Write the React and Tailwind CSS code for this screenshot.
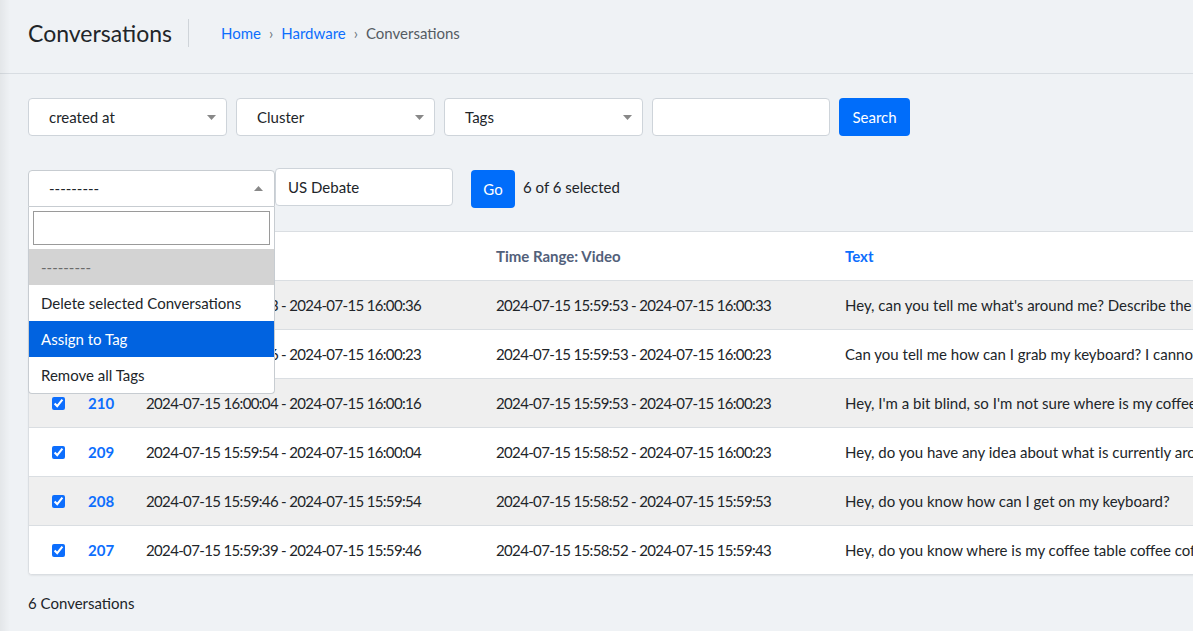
import React from "react";

const rows = [
  {
    id: 212,
    audio: "2024-07-15 16:00:23 - 2024-07-15 16:00:36",
    video: "2024-07-15 15:59:53 - 2024-07-15 16:00:33",
    text: "Hey, can you tell me what's around me? Describe the room and everything that is in front of me.",
  },
  {
    id: 211,
    audio: "2024-07-15 16:00:16 - 2024-07-15 16:00:23",
    video: "2024-07-15 15:59:53 - 2024-07-15 16:00:23",
    text: "Can you tell me how can I grab my keyboard? I cannot find it on my desk.",
  },
  {
    id: 210,
    audio: "2024-07-15 16:00:04 - 2024-07-15 16:00:16",
    video: "2024-07-15 15:59:53 - 2024-07-15 16:00:23",
    text: "Hey, I'm a bit blind, so I'm not sure where is my coffee table. Can you help me?",
  },
  {
    id: 209,
    audio: "2024-07-15 15:59:54 - 2024-07-15 16:00:04",
    video: "2024-07-15 15:58:52 - 2024-07-15 16:00:23",
    text: "Hey, do you have any idea about what is currently around me?",
  },
  {
    id: 208,
    audio: "2024-07-15 15:59:46 - 2024-07-15 15:59:54",
    video: "2024-07-15 15:58:52 - 2024-07-15 15:59:53",
    text: "Hey, do you know how can I get on my keyboard?",
  },
  {
    id: 207,
    audio: "2024-07-15 15:59:39 - 2024-07-15 15:59:46",
    video: "2024-07-15 15:58:52 - 2024-07-15 15:59:43",
    text: "Hey, do you know where is my coffee table coffee cof cup?",
  },
];

const cols = "grid grid-cols-[47px_58px_350px_349px_1fr] items-center";

function Caret({ up }) {
  return (
    <svg width="9" height="5" viewBox="0 0 9 5" className="shrink-0">
      {up ? <path d="M0 5 L4.5 0 L9 5 Z" fill="#888" /> : <path d="M0 0 L4.5 5 L9 0 Z" fill="#888" />}
    </svg>
  );
}

function FilterSelect({ label }) {
  return (
    <div className="flex h-[38px] w-[199px] items-center justify-between rounded-[4px] border border-[#ced4da] bg-white pl-[20px] pr-[10px] text-[15px] text-[#212529]">
      <span>{label}</span>
      <Caret />
    </div>
  );
}

function Check() {
  return <input type="checkbox" checked readOnly className="h-[13px] w-[13px] accent-[#0d6efd]" />;
}

export default function App() {
  return (
    <div className="relative h-screen w-full overflow-hidden bg-[#eff2f5] font-['Lato',sans-serif] text-[#212529]">
      <div className="pointer-events-none absolute left-0 top-0 z-20 h-full w-[10px] bg-gradient-to-r from-black/[0.05] to-transparent" />

      <header className="flex h-[74px] items-center border-b border-[#d8dde2] pb-[8px] pl-[28px]">
        <h1 className="border-r border-[#cfd4d9] pr-[16px] text-[23px] leading-[28px] text-[#212529]">Conversations</h1>
        <nav className="ml-[32px] mt-[2px] flex items-center gap-[8px] text-[15px]">
          <span className="text-[#0d6efd]">Home</span>
          <span className="text-[#6c757d]">›</span>
          <span className="text-[#0d6efd]">Hardware</span>
          <span className="text-[#6c757d]">›</span>
          <span className="text-[#555c63]">Conversations</span>
        </nav>
      </header>

      <div className="px-[28px]">
        <div className="mt-[24px] flex items-center gap-[9px]">
          <FilterSelect label="created at" />
          <FilterSelect label="Cluster" />
          <FilterSelect label="Tags" />
          <div className="h-[38px] w-[178px] rounded-[4px] border border-[#ced4da] bg-white" />
          <button className="h-[38px] w-[71px] rounded-[4px] bg-[#006dfa] text-[15px] text-white">Search</button>
        </div>

        <div className="mt-[32px] flex items-start">
          <div className="relative z-10 mt-[2px]">
            <div className="flex h-[37px] w-[247px] items-center justify-between rounded-t-[4px] border border-[#c7ccd1] bg-white pl-[20px] pr-[11px] text-[15px]">
              <span>---------</span>
              <Caret up />
            </div>
            <div className="absolute left-0 top-full w-[247px] overflow-hidden rounded-b-[4px] border border-t-0 border-[#c7ccd1] bg-white text-[15px]">
              <div className="p-[4px]">
                <div className="h-[34px] border border-[#9a9a9a] bg-white" />
              </div>
              <div className="flex h-[36px] items-center bg-[#d3d3d3] pl-[12px] text-[#6b6b6b]">---------</div>
              <div className="flex h-[36px] items-center pl-[12px]">Delete selected Conversations</div>
              <div className="flex h-[36px] items-center bg-[#0163e0] pl-[12px] text-white">Assign to Tag</div>
              <div className="flex h-[36px] items-center pl-[12px]">Remove all Tags</div>
            </div>
          </div>
          <div className="flex h-[38px] w-[178px] items-center rounded-[4px] border border-[#ced4da] bg-white pl-[12px] text-[15px]">
            US Debate
          </div>
          <button className="ml-[18px] mt-[2px] h-[38px] w-[44px] rounded-[4px] bg-[#006dfa] text-[15px] text-white">Go</button>
          <span className="ml-[8px] flex h-[38px] items-center text-[15px]">6 of 6 selected</span>
        </div>

        <div className="mt-[23px] w-[1400px] overflow-hidden rounded-[4px] border border-[#dadee2] bg-white shadow-[0_1px_2px_rgba(0,0,0,0.06)]">
          <div className={`${cols} h-[48px] text-[15px] font-bold text-[#52607a]`}>
            <div className="pl-[23px]">
              <Check />
            </div>
            <div className="pl-[12px]">ID</div>
            <div className="pl-[12px]">Time Range: Audio</div>
            <div className="pl-[12px]">Time Range: Video</div>
            <div className="pl-[12px] text-[#0d6efd]">Text</div>
          </div>
          {rows.map((r, i) => (
            <div
              key={r.id}
              className={`${cols} h-[49px] border-t border-[#dadee2] text-[15px] ${i % 2 === 0 ? "bg-[#efefef]" : "bg-white"}`}
            >
              <div className="flex pl-[23px]">
                <Check />
              </div>
              <div className="pl-[12px] font-bold text-[#0d6efd]">{r.id}</div>
              <div className="whitespace-nowrap pl-[12px] tracking-[-0.65px]">{r.audio}</div>
              <div className="whitespace-nowrap pl-[12px] tracking-[-0.65px]">{r.video}</div>
              <div className="whitespace-nowrap pl-[12px]">{r.text}</div>
            </div>
          ))}
        </div>

        <p className="mt-[17px] text-[15px]">6 Conversations</p>
      </div>
    </div>
  );
}
